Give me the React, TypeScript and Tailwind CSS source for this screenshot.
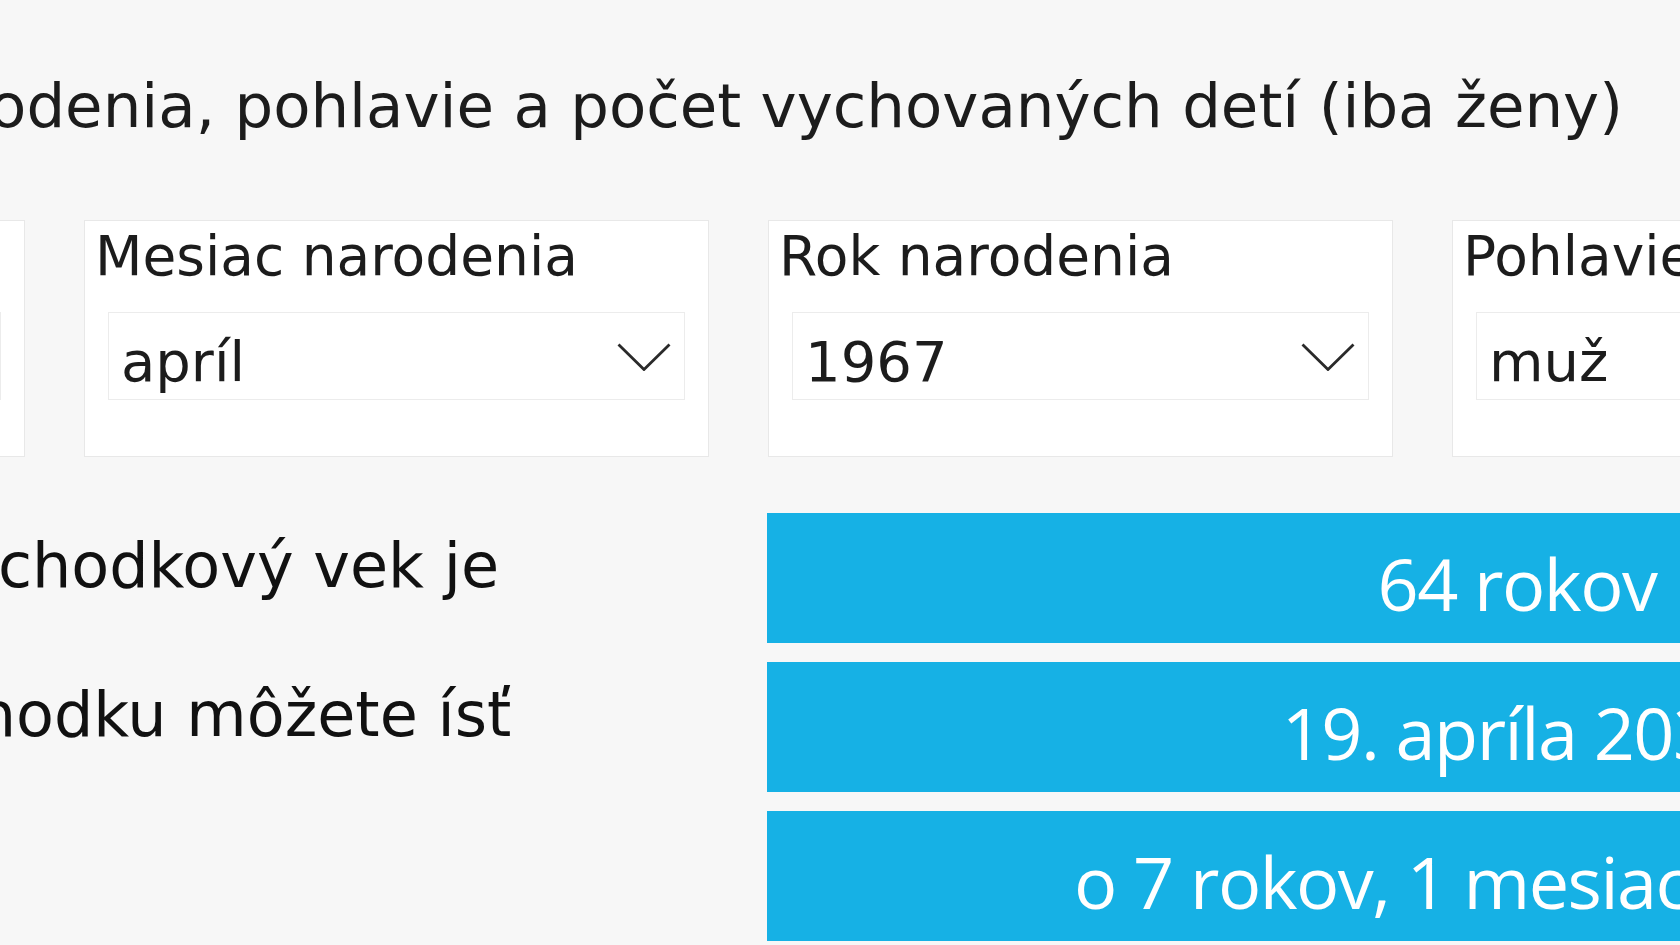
type Slicer = { label: string; value: string }

const slicers: Slicer[] = [
  { label: 'Deň narodenia', value: '19' },
  { label: 'Mesiac narodenia', value: 'apríl' },
  { label: 'Rok narodenia', value: '1967' },
  { label: 'Pohlavie', value: 'muž' },
]

// each label is its own text box in the report, so the indents differ a little
const results = [
  { label: 'Váš dôchodkový vek je', value: '64 rokov', indent: 'pl-[393px]' },
  { label: 'Do dôchodku môžete ísť', value: '19. apríla 2031', indent: 'pl-[360px]' },
  { label: '', value: 'o 7 rokov, 1 mesiac a 28 dní', indent: 'pl-[393px]' },
]

function Chevron() {
  return (
    <svg width="54" height="28" viewBox="0 0 54 28" fill="none" className="shrink-0">
      <polyline points="1.5,1.5 27,26.5 52.5,1.5" stroke="#2a2a2a" strokeWidth="2.8" />
    </svg>
  )
}

function SlicerCard({ item }: { item: Slicer }) {
  return (
    <div className="w-[625px] h-[237px] shrink-0 bg-white border border-[#e8e8e8] pt-[8px]">
      <div className="pl-[10px] text-[55px] leading-none text-[#1c1c1c] whitespace-nowrap">{item.label}</div>
      <div className="mx-[23px] mt-[28px] h-[88px] border border-[#ececec] bg-white flex items-center justify-between pl-[12px] pr-[13px] pt-[1px]">
        <span className="text-[56px] leading-none text-[#1c1c1c] pt-[11px]">{item.value}</span>
        <Chevron />
      </div>
    </div>
  )
}

export default function App() {
  return (
    <div className="w-screen h-screen overflow-hidden bg-[#f7f7f7] font-['DejaVu_Sans',sans-serif]">
      <div className="-ml-[600px] pt-[75px]">
        {/* Report title, right edge at the visible end; the start runs off to the left */}
        <div className="w-[2223px] flex justify-end">
          <h1 className="shrink-0 whitespace-nowrap text-[61px] leading-none font-normal text-[#1c1c1c]">
            Zadajte deň, mesiac a rok narodenia, pohlavie a počet vychovaných detí (iba ženy)
          </h1>
        </div>

        {/* Slicers */}
        <div className="flex gap-[59px] mt-[84px]">
          {slicers.map(s => (
            <SlicerCard key={s.label} item={s} />
          ))}
        </div>

        {/* Results */}
        <div className="mt-[56px] flex flex-col gap-[19px]">
          {results.map((r, i) => (
            <div key={i} className="flex">
              <div className={`w-[1367px] shrink-0 pt-[22px] text-[62px] leading-none text-[#111] whitespace-nowrap ${r.indent}`}>
                {r.label}
              </div>
              <div className="w-[1500px] h-[130px] shrink-0 bg-[#16b1e5] flex items-center justify-center pt-[10px]">
                <span className="font-['Open_Sans',sans-serif] text-[72px] leading-none tracking-[-1.5px] text-white whitespace-nowrap">
                  {r.value}
                </span>
              </div>
            </div>
          ))}
        </div>
      </div>
    </div>
  )
}
